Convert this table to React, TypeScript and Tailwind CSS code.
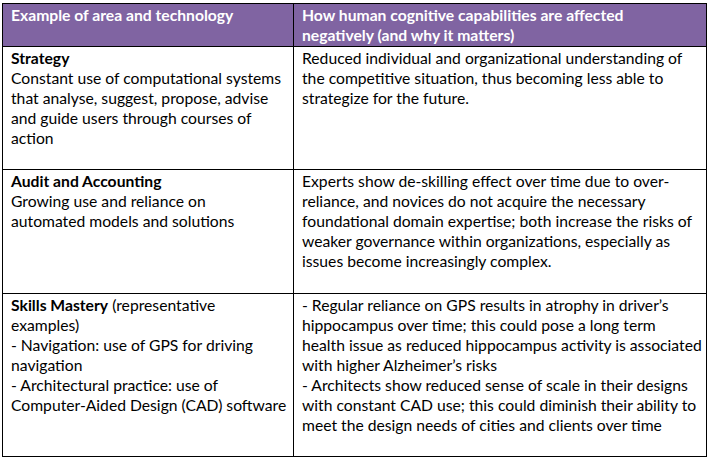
import React from "react";

type Line = React.ReactNode;

function Cell({ lines, className = "" }: { lines: Line[]; className?: string }) {
  return (
    <div className={`pl-[8px] pt-[1px] ${className}`}>
      {lines.map((l, i) => (
        <div key={i} className="whitespace-nowrap leading-[20px] h-[20px]">
          {l}
        </div>
      ))}
    </div>
  );
}

export default function App() {
  const font = { fontFamily: "Lato, 'Liberation Sans', sans-serif" };
  return (
    <div className="w-[711px] h-[460px] bg-white pt-[3px] pl-[2px]" style={font}>
      <div className="w-[705px] border-l border-t border-black text-[15.7px] text-black grid grid-cols-[291px_413px]">
        {/* Header */}
        <Cell
          className="h-[43px] bg-[#8064a2] text-white font-bold border-r border-black border-b"
          lines={["Example of area and technology"]}
        />
        <Cell
          className="h-[43px] bg-[#8064a2] text-white font-bold border-r border-black border-b"
          lines={["How human cognitive capabilities are affected", "negatively (and why it matters)"]}
        />
        {/* Row 1 */}
        <Cell
          className="h-[123px] border-r border-b border-black"
          lines={[
            <b>Strategy</b>,
            "Constant use of computational systems",
            "that analyse, suggest, propose, advise",
            "and guide users through courses of",
            "action",
          ]}
        />
        <Cell
          className="h-[123px] border-r border-b border-black"
          lines={[
            "Reduced individual and organizational understanding of",
            "the competitive situation, thus becoming less able to",
            "strategize for the future.",
          ]}
        />
        {/* Row 2 */}
        <Cell
          className="h-[124px] border-r border-b border-black"
          lines={[
            <b>Audit and Accounting</b>,
            "Growing use and reliance on",
            "automated models and solutions",
          ]}
        />
        <Cell
          className="h-[124px] border-r border-b border-black"
          lines={[
            "Experts show de-skilling effect over time due to over-",
            "reliance, and novices do not acquire the necessary",
            "foundational domain expertise; both increase the risks of",
            "weaker governance within organizations, especially as",
            "issues become increasingly complex.",
          ]}
        />
        {/* Row 3 */}
        <Cell
          className="h-[163px] border-r border-b border-black"
          lines={[
            <>
              <b>Skills Mastery</b> (representative
            </>,
            "examples)",
            "- Navigation: use of GPS for driving",
            "navigation",
            "- Architectural practice: use of",
            "Computer-Aided Design (CAD) software",
          ]}
        />
        <Cell
          className="h-[163px] border-r border-b border-black"
          lines={[
            "- Regular reliance on GPS results in atrophy in driver\u2019s",
            "hippocampus over time; this could pose a long term",
            "health issue as reduced hippocampus activity is associated",
            "with higher Alzheimer\u2019s risks",
            "- Architects show reduced sense of scale in their designs",
            "with constant CAD use; this could diminish their ability to",
            "meet the design needs of cities and clients over time",
          ]}
        />
      </div>
    </div>
  );
}
